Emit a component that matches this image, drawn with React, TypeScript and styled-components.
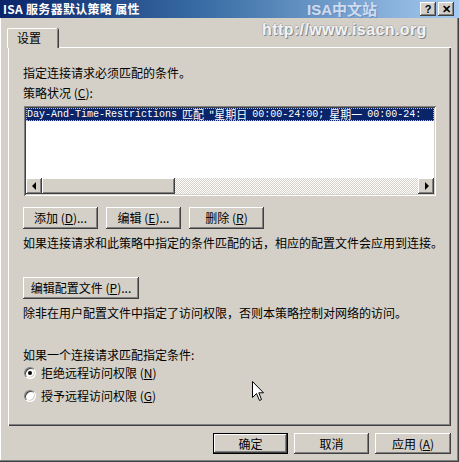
import styled, { createGlobalStyle } from 'styled-components'

const GlobalStyle = createGlobalStyle`
  html, body {
    margin: 0;
    padding: 0;
    background: #d4d0c8;
  }
  body {
    font-family: "Noto Sans CJK SC", "DejaVu Sans", sans-serif;
    font-size: 12px;
    color: #000;
  }
  * {
    box-sizing: border-box;
  }
`

const raised = `
  box-shadow: inset -1px -1px #404040, inset 1px 1px #fff, inset -2px -2px #808080, inset 2px 2px #d4d0c8;
`

const Window = styled.div`
  position: relative;
  width: 459px;
  height: 462px;
  background: #d4d0c8;
  box-shadow: inset -1px -1px #404040, inset -2px -2px #808080, inset 1px 1px #fff;
  display: flex;
  flex-direction: column;
  overflow: hidden;
`

const TitleBar = styled.div`
  height: 18px;
  display: flex;
  align-items: center;
  padding: 0 5px 0 3px;
  background: linear-gradient(to right, #0a246a 0%, #3a6ea5 45%, #a6caf0 100%);
  color: #fff;
  font-weight: bold;
  font-size: 12px;
  line-height: 14px;
`

const TitleText = styled.span`
  letter-spacing: 0.3px;
`

const TitleButtons = styled.div`
  margin-left: auto;
  display: flex;
  gap: 2px;
`

const TitleButton = styled.div`
  width: 16px;
  height: 14px;
  background: #d4d0c8;
  ${raised}
  color: #000;
  font-family: "Liberation Sans", sans-serif;
  font-weight: bold;
  font-size: 11px;
  line-height: 14px;
  text-align: center;
`

const Body = styled.div`
  padding: 10px 0 0 8px;
  display: flex;
  flex-direction: column;
`

const TabStrip = styled.div`
  display: flex;
  margin-left: -1px;
  position: relative;
  z-index: 1;
  margin-bottom: -1px;
`

const Tab = styled.div`
  width: 51px;
  height: 20px;
  background: #d4d0c8;
  border-top: 1px solid #fff;
  border-left: 1px solid #fff;
  box-shadow: inset -1px 0 #808080, 1px 0 #404040;
  border-radius: 2px 2px 0 0;
  padding-left: 9px;
  line-height: 18px;
`

const Panel = styled.div`
  width: 443px;
  height: 379px;
  border-top: 1px solid #fff;
  border-left: 1px solid #fff;
  box-shadow: inset -1px -1px #404040, inset -2px -2px #808080;
  padding: 18px 0 0 14px;
  display: flex;
  flex-direction: column;
  align-items: flex-start;
`

const Text = styled.div<{ $top: number }>`
  margin-top: ${({ $top }) => $top}px;
  line-height: 14px;
  height: 14px;
  white-space: nowrap;
`

const ListBox = styled.div`
  margin-top: 6px;
  margin-left: 1px;
  width: 412px;
  height: 90px;
  background: #fff;
  box-shadow: inset 1px 1px #808080, inset -1px -1px #fff, inset 2px 2px #404040, inset -2px -2px #d4d0c8;
  padding: 2px;
  display: flex;
  flex-direction: column;
`

const ListArea = styled.div`
  flex: 1;
`

const SelectedRow = styled.div`
  height: 13px;
  background: #0a246a;
  color: #fff;
  outline: 1px dotted #b8b8c8;
  outline-offset: -1px;
  font-family: "Liberation Mono", monospace;
  font-size: 10px;
  line-height: 13px;
  white-space: nowrap;
  padding-left: 1px;
  display: flex;
  align-items: center;
`

const Cjk = styled.span`
  line-height: 13px;
  font-family: "Noto Sans CJK SC", sans-serif;
  font-size: 11px;
`

const Gap = styled.span`
  display: inline-block;
  width: 5px;
`

const ScrollBar = styled.div`
  height: 16px;
  display: flex;
`

const ScrollButton = styled.div<{ $dir: 'left' | 'right' }>`
  width: 16px;
  height: 16px;
  background: #d4d0c8;
  ${raised}
  display: flex;
  align-items: center;
  justify-content: center;

  &::after {
    content: '';
    width: 0;
    height: 0;
    border-top: 4px solid transparent;
    border-bottom: 4px solid transparent;
    ${({ $dir }) =>
      $dir === 'left' ? 'border-right: 4px solid #000; margin-right: 1px;' : 'border-left: 4px solid #000; margin-left: 1px;'}
  }
`

const Thumb = styled.div`
  width: 133px;
  height: 16px;
  background: #d4d0c8;
  ${raised}
`

const Track = styled.div`
  flex: 1;
  background: repeating-conic-gradient(#fff 0 25%, #d4d0c8 0 50%) 0 0 / 2px 2px;
`

const ButtonRow = styled.div`
  margin-top: 11px;
  display: flex;
  gap: 8px;
`

const Button = styled.div<{ $width: number; $default?: boolean }>`
  width: ${({ $width }) => $width}px;
  height: 22px;
  background: #d4d0c8;
  ${raised}
  ${({ $default }) =>
    $default
      ? 'box-shadow: inset 0 0 0 1px #000, inset -2px -2px #404040, inset 2px 2px #fff, inset -3px -3px #808080;'
      : ''}
  display: flex;
  align-items: center;
  justify-content: center;
  line-height: 14px;
  white-space: nowrap;
`

const ProfileButton = styled(Button)`
  margin-top: 27px;
`

const RadioRow = styled.div<{ $top: number }>`
  margin-top: ${({ $top }) => $top}px;
  margin-left: 1px;
  display: flex;
  align-items: center;
  gap: 5px;
  height: 14px;
  line-height: 14px;
`

const Radio = styled.div<{ $checked?: boolean }>`
  width: 12px;
  height: 12px;
  border-radius: 50%;
  background: #fff;
  border: 1px solid;
  border-color: #808080 #fff #fff #808080;
  box-shadow: inset 1px 1px #404040, inset -1px -1px #d4d0c8;
  display: flex;
  align-items: center;
  justify-content: center;

  &::after {
    content: '';
    width: 4px;
    height: 4px;
    border-radius: 50%;
    background: ${({ $checked }) => ($checked ? '#000' : 'transparent')};
  }
`

const Footer = styled.div`
  width: 443px;
  margin-top: 7px;
  display: flex;
  justify-content: flex-end;
  gap: 6px;
`

const FooterButton = styled(Button)`
  height: 21px;
`

const WatermarkTitle = styled.div`
  position: absolute;
  left: 307px;
  top: 1px;
  font-family: "Liberation Sans", "Noto Sans CJK SC", sans-serif;
  font-size: 15px;
  font-weight: bold;
  line-height: 17px;
  color: #cfdcef;
  text-shadow: 1px 1px 1px #6a8cbe;
`

const WatermarkUrl = styled.div`
  position: absolute;
  left: 262px;
  top: 21px;
  font-family: "Liberation Sans", sans-serif;
  font-size: 16px;
  font-weight: bold;
  line-height: 18px;
  letter-spacing: 0.4px;
  color: #f2f2f2;
  text-shadow: 1px 1px 0 #8a8a8a, -1px 0 0 #b8b8b8, 0 -1px 0 #b8b8b8;
`

const Cursor = styled.svg`
  position: absolute;
  left: 252px;
  top: 381px;
`

const Key = ({ k }: { k: string }) => (
  <>
    (<u>{k}</u>)
  </>
)

const App = () => {
  return (
    <>
      <GlobalStyle />
      <Window>
        <TitleBar>
          <TitleText>ISA 服务器默认策略 属性</TitleText>
          <TitleButtons>
            <TitleButton>?</TitleButton>
            <TitleButton>✕</TitleButton>
          </TitleButtons>
        </TitleBar>
        <Body>
          <TabStrip>
            <Tab>设置</Tab>
          </TabStrip>
          <Panel>
            <Text $top={0}>指定连接请求必须匹配的条件。</Text>
            <Text $top={6}>
              策略状况 <Key k="C" />:
            </Text>
            <ListBox>
              <ListArea>
                <SelectedRow>
                  Day-And-Time-Restrictions
                  <Gap />
                  <Cjk>匹配</Cjk>
                  <Gap />
                  <Cjk>"星期日</Cjk>
                  <Gap />
                  00:00-24:00;
                  <Gap />
                  <Cjk>星期一</Cjk>
                  <Gap />
                  00:00-24:
                </SelectedRow>
              </ListArea>
              <ScrollBar>
                <ScrollButton $dir="left" />
                <Thumb />
                <Track />
                <ScrollButton $dir="right" />
              </ScrollBar>
            </ListBox>
            <ButtonRow>
              <Button $width={75}>
                添加 <Key k="D" />...
              </Button>
              <Button $width={75}>
                编辑 <Key k="E" />...
              </Button>
              <Button $width={75}>
                删除 <Key k="R" />
              </Button>
            </ButtonRow>
            <Text $top={7}>如果连接请求和此策略中指定的条件匹配的话，相应的配置文件会应用到连接。</Text>
            <ProfileButton $width={116}>
              编辑配置文件 <Key k="P" />...
            </ProfileButton>
            <Text $top={7}>除非在用户配置文件中指定了访问权限，否则本策略控制对网络的访问。</Text>
            <Text $top={28}>如果一个连接请求匹配指定条件:</Text>
            <RadioRow $top={4}>
              <Radio $checked />
              <span>
                拒绝远程访问权限 <Key k="N" />
              </span>
            </RadioRow>
            <RadioRow $top={9}>
              <Radio />
              <span>
                授予远程访问权限 <Key k="G" />
              </span>
            </RadioRow>
          </Panel>
          <Footer>
            <FooterButton $width={75} $default>
              确定
            </FooterButton>
            <FooterButton $width={75}>取消</FooterButton>
            <FooterButton $width={76}>
              应用 <Key k="A" />
            </FooterButton>
          </Footer>
        </Body>
        <WatermarkTitle>ISA中文站</WatermarkTitle>
        <WatermarkUrl>http://www.isacn.org</WatermarkUrl>
        <Cursor width="13" height="21" viewBox="0 0 13 21">
          <path
            d="M0.5 0.5 L0.5 16.5 L4.5 12.5 L7.5 19.5 L9.5 18.5 L6.8 11.8 L11.5 11.8 Z"
            fill="#fff"
            stroke="#000"
            strokeWidth="1"
          />
        </Cursor>
      </Window>
    </>
  )
}

export default App
